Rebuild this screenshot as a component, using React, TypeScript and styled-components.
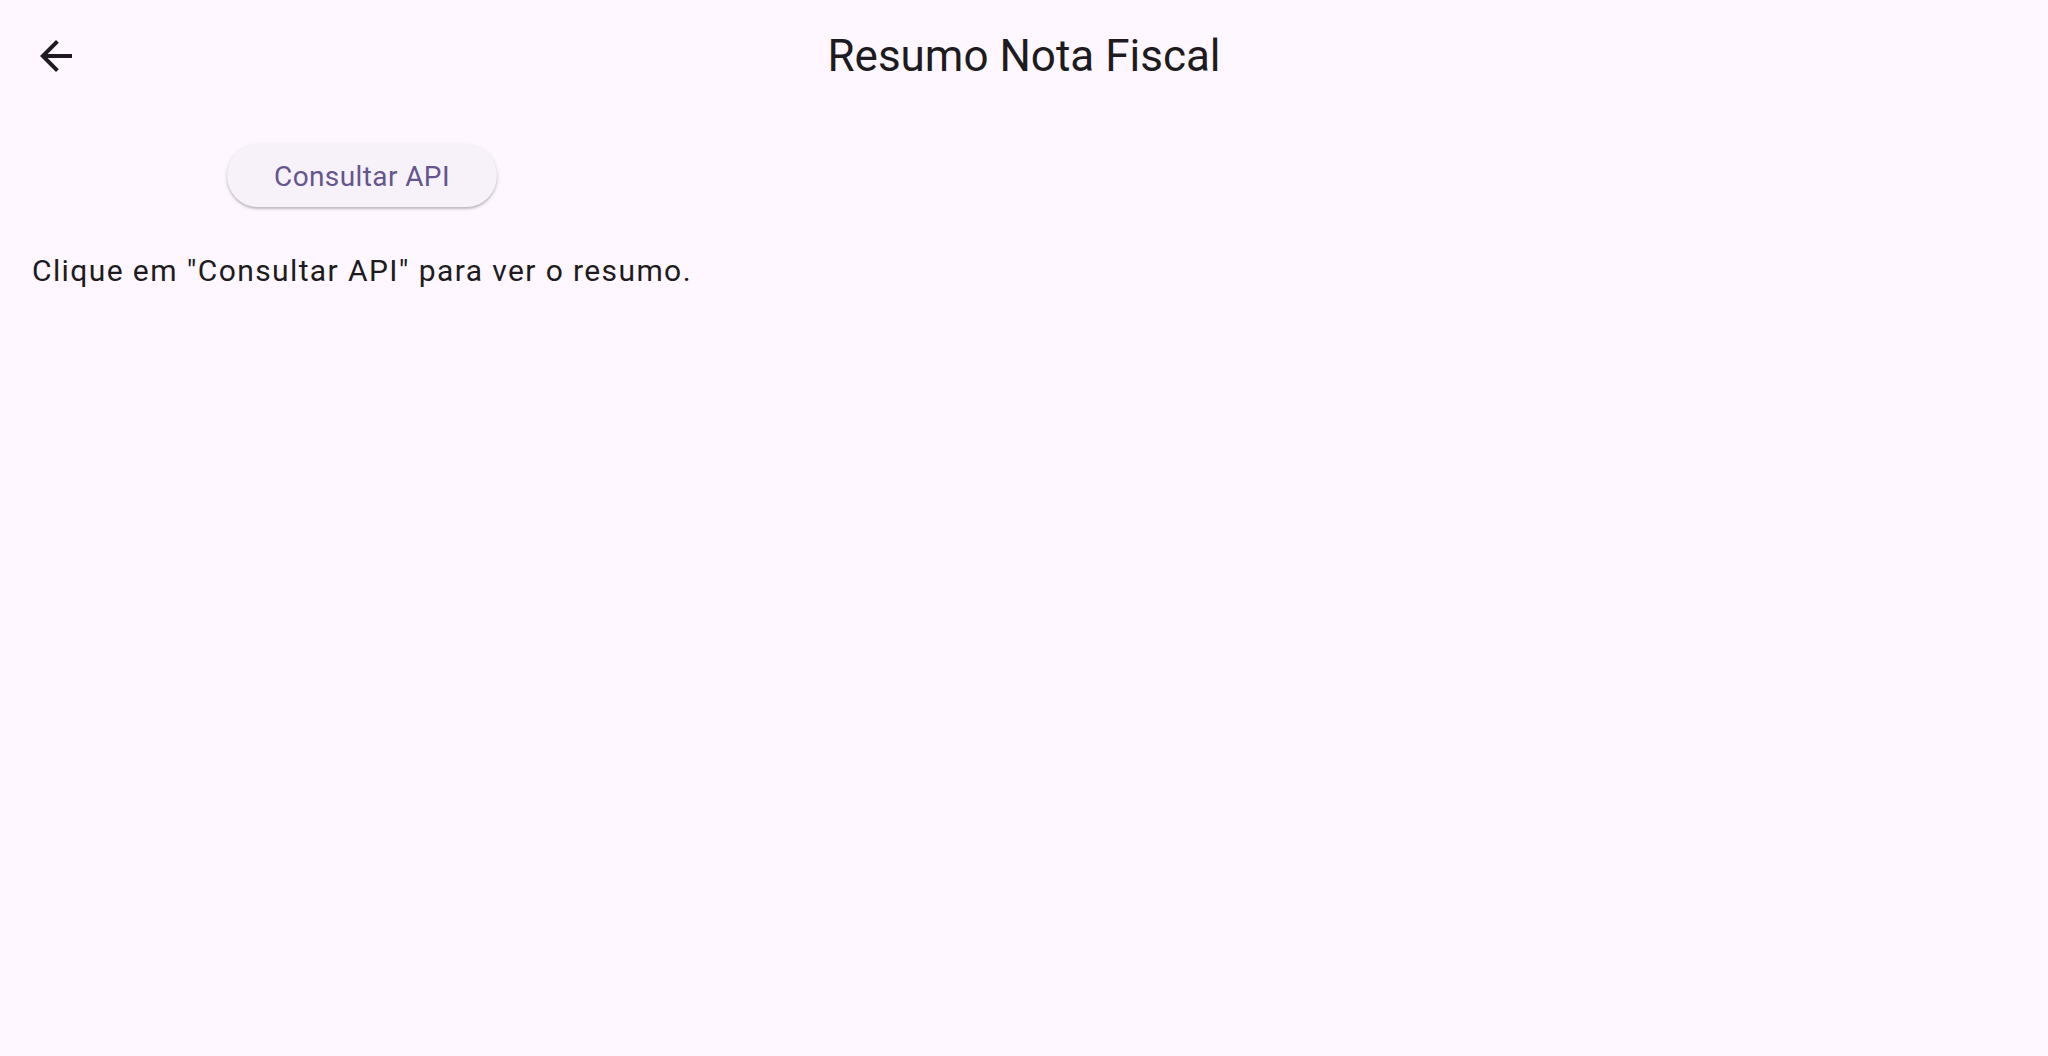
import React from "react";
import styled, { createGlobalStyle } from "styled-components";

const GlobalStyle = createGlobalStyle`
  html, body {
    margin: 0;
    padding: 0;
    background: #fef7ff;
  }
  body {
    font-family: Roboto, "Noto Sans", "Liberation Sans", sans-serif;
    color: #1d1b20;
    -webkit-font-smoothing: antialiased;
  }
  * { box-sizing: border-box; }
`;

const Page = styled.div`
  width: 2048px;
  height: 1056px;
  background: #fef7ff;
  display: flex;
  flex-direction: column;
`;

const AppBar = styled.header`
  height: 112px;
  flex: none;
  display: grid;
  grid-template-columns: 112px 1fr 112px;
  align-items: center;
`;

const BackButton = styled.button`
  justify-self: center;
  width: 80px;
  height: 80px;
  border: none;
  border-radius: 50%;
  background: transparent;
  padding: 0;
  display: flex;
  align-items: center;
  justify-content: center;
  color: #1d1b20;
  cursor: pointer;
`;

const Title = styled.h1`
  margin: 0;
  text-align: center;
  font-family: Roboto, "Noto Sans", sans-serif;
  font-weight: 400;
  font-size: 44px;
  line-height: 56px;
  color: #1d1b20;
`;

const Body = styled.main`
  padding: 33px 32px 32px;
  align-self: flex-start;
  display: inline-flex;
  flex-direction: column;
  align-items: center;
  gap: 44px;
`;

const ElevatedButton = styled.button`
  height: 62px;
  padding: 0 47px;
  border: none;
  border-radius: 31px;
  background: #f7f2fa;
  color: #65558f;
  font-family: Roboto, "Noto Sans", sans-serif;
  font-weight: 400;
  font-size: 28px;
  letter-spacing: 0.4px;
  box-shadow: 0 2px 2px rgba(0, 0, 0, 0.18), 0 1px 5px rgba(0, 0, 0, 0.12);
  cursor: pointer;
`;

const Message = styled.p`
  margin: 0;
  font-family: Roboto, "Noto Sans", sans-serif;
  font-weight: 400;
  font-size: 30px;
  line-height: 40px;
  letter-spacing: 1.4px;
  color: #1d1b20;
`;

const ArrowBack = () => (
  <svg width="48" height="48" viewBox="0 0 24 24" fill="currentColor" aria-hidden="true">
    <path d="M20 11H7.83l5.59-5.59L12 4l-8 8 8 8 1.41-1.41L7.83 13H20v-2z" />
  </svg>
);

export default function App() {
  return (
    <>
      <GlobalStyle />
      <Page>
        <AppBar>
          <BackButton aria-label="Voltar">
            <ArrowBack />
          </BackButton>
          <Title>Resumo Nota Fiscal</Title>
          <span />
        </AppBar>
        <Body>
          <ElevatedButton>Consultar API</ElevatedButton>
          <Message>Clique em "Consultar API" para ver o resumo.</Message>
        </Body>
      </Page>
    </>
  );
}
